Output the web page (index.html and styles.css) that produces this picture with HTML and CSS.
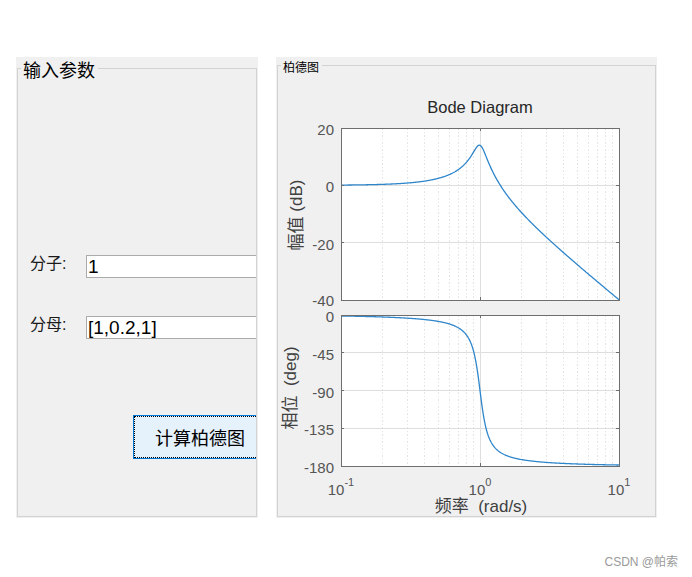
FILE: index.html
```html
<!DOCTYPE html>
<html lang="zh">
<head>
<meta charset="utf-8">
<title>柏德图</title>
<link rel="stylesheet" href="styles.css">
</head>
<body>
<div class="page">
  <div class="panels">
    <section class="panel panel-input">
      <div class="frame">
        <span class="legend legend-lg">输入参数</span>
        <div class="form">
          <div class="row"><label class="lbl">分子:</label><input class="field" value="1"></div>
          <div class="row"><label class="lbl">分母:</label><input class="field" value="[1,0.2,1]"></div>
          <button class="btn"><span class="btn-focus">计算柏德图</span></button>
        </div>
      </div>
    </section>
    <section class="panel panel-plot">
      <div class="frame">
        <span class="legend legend-sm">柏德图</span>
        <svg class="plot" width="377" height="450" viewBox="278 66 377 450" xmlns="http://www.w3.org/2000/svg">
          <text class="ptitle" x="480" y="113" text-anchor="middle">Bode Diagram</text>

          <rect class="axbg" x="341" y="128" width="278" height="172"/>
          <path class="minor" id="mag-minor"/>
          <path class="major" id="mag-major"/>
          <path class="curve" id="mag-curve"/>
          <rect class="axbox" x="341" y="128" width="278" height="172"/>
          <path class="ticks" id="mag-ticks"/>

          <rect class="axbg" x="341" y="315" width="278" height="151"/>
          <path class="minor" id="ph-minor"/>
          <path class="major" id="ph-major"/>
          <path class="curve" id="ph-curve"/>
          <rect class="axbox" x="341" y="315" width="278" height="151"/>
          <path class="ticks" id="ph-ticks"/>

          <g class="tick" text-anchor="end">
            <text x="334" y="135">20</text>
            <text x="334" y="192.3">0</text>
            <text x="334" y="249.7">-20</text>
            <text x="334" y="306">-40</text>
            <text x="334" y="322">0</text>
            <text x="334" y="359.8">-45</text>
            <text x="334" y="397.5">-90</text>
            <text x="334" y="435.3">-135</text>
            <text x="334" y="473">-180</text>
          </g>
          <g class="tick" text-anchor="middle">
            <text x="341" y="495">10<tspan class="sup" dy="-9">-1</tspan></text>
            <text x="480" y="495">10<tspan class="sup" dy="-9">0</tspan></text>
            <text x="619" y="495">10<tspan class="sup" dy="-9">1</tspan></text>
          </g>
          <text class="alabel" transform="translate(302 215) rotate(-90)" text-anchor="middle">幅值 (dB)</text>
          <text class="alabel" transform="translate(295.5 388) rotate(-90)" text-anchor="middle">相位  (deg)</text>
          <text class="alabel" x="481" y="512" text-anchor="middle">频率  (rad/s)</text>
        </svg>
      </div>
    </section>
  </div>
  <div class="watermark">CSDN @帕索</div>
</div>
<script src="script.js"></script>
</body>
</html>
```

FILE: styles.css
```css
* { box-sizing: border-box; }
html, body { margin: 0; background: #ffffff; }
body { font-family: "Liberation Sans", "Noto Sans CJK SC", sans-serif; color: #000; }

.page { width: 692px; height: 577px; padding: 57px 0 0 16px; overflow: hidden; }
.panels { display: flex; gap: 18px; }

.panel { background: #f0f0f0; height: 461px; }
.panel-input { width: 242px; padding: 11px 1px 1px 1px; }
.panel-plot { width: 381px; padding: 8px 1px 1px 1px; }

.frame { position: relative; height: 100%; border: 1px solid #d2d2d2; }

.legend {
  position: absolute;
  left: 3px;
  background: #f0f0f0;
  padding: 0 3px 0 2px;
  white-space: nowrap;
  font-family: "Noto Sans CJK SC", sans-serif;
  color: #000;
}
.legend-lg { top: -9px; font-size: 18px; line-height: 18px; }
.legend-sm { top: -5px; font-size: 12px; line-height: 12px; }

.form { height: 100%; overflow: hidden; padding: 186px 0 0 12px; }
.row { display: flex; align-items: flex-start; height: 23px; }
.row + .row { margin-top: 38px; }
.lbl {
  width: 56px;
  flex: none;
  font-size: 16px;
  line-height: 18px;
  font-family: "Liberation Sans", "Noto Sans CJK SC", sans-serif;
  color: #1a1a1a;
}
.field {
  flex: none;
  width: 220px;
  height: 23px;
  margin: 0;
  border: 1px solid #ababab;
  background: #fff;
  padding: 1px 1px 0 1px;
  font-family: "Liberation Sans", sans-serif;
  font-size: 19px;
  line-height: 21px;
  color: #000;
  outline: none;
}

.btn {
  display: block;
  margin: 76px 0 0 103px;
  width: 170px;
  height: 44px;
  padding: 0;
  border: 1px solid #0078d7;
  background: #e5f1fb;
  font-family: "Noto Sans CJK SC", sans-serif;
  font-size: 18px;
  color: #000;
}
.btn-focus {
  display: flex;
  align-items: center;
  height: 100%;
  padding-left: 20px;
  border: 1px dotted #000;
  white-space: nowrap;
}

.plot { display: block; }
.ptitle { font-family: "Liberation Sans", sans-serif; font-size: 16.5px; fill: #262626; }
.axbg { fill: #ffffff; }
.axbox { fill: none; stroke: #6e6e6e; stroke-width: 1; shape-rendering: crispEdges; }
.major { fill: none; stroke: #dedede; stroke-width: 1; shape-rendering: crispEdges; }
.minor { fill: none; stroke: #e4e4e4; stroke-width: 1; stroke-dasharray: 1.5 2; shape-rendering: crispEdges; }
.ticks { fill: none; stroke: #6e6e6e; stroke-width: 1; shape-rendering: crispEdges; }
.curve { fill: none; stroke: #2f86cb; stroke-width: 1.3; }
.tick { font-family: "Liberation Sans", sans-serif; font-size: 15px; fill: #555; }
.sup { font-size: 11px; }
.alabel {
  font-family: "Liberation Sans", "Noto Sans CJK SC", sans-serif;
  font-size: 17px;
  fill: #404040;
  white-space: pre;
}

.watermark {
  margin-top: 36px;
  padding-right: 14px;
  text-align: right;
  font-family: "Liberation Sans", "Noto Sans CJK SC", sans-serif;
  font-size: 12px;
  line-height: 16px;
  color: #9a9a9a;
}
```

FILE: script.js
```js
(function () {
  var X0 = 341, D = 139;
  function X(lw) { return X0 + (lw + 1) * D; }
  var A = {
    mag: { t: 128, b: 300, min: -40, max: 20, majors: [0, -20] },
    ph: { t: 315, b: 466, min: -180, max: 0, majors: [-45, -90, -135] }
  };
  function Y(a, v) { return a.t + (a.max - v) / (a.max - a.min) * (a.b - a.t); }
  var minorX = [];
  for (var d = -1; d < 1; d++) {
    for (var k = 2; k <= 9; k++) minorX.push(X(d + Math.log10(k)));
  }
  ['mag', 'ph'].forEach(function (id) {
    var a = A[id];
    var minor = '', major = '', ticks = '';
    minorX.forEach(function (x) { minor += 'M' + x.toFixed(2) + ' ' + a.t + 'V' + a.b; });
    major += 'M480 ' + a.t + 'V' + a.b;
    a.majors.forEach(function (v) {
      var y = Y(a, v).toFixed(2);
      major += 'M341 ' + y + 'H619';
      ticks += 'M341 ' + y + 'h3M619 ' + y + 'h-3';
    });
    ticks += 'M480 ' + a.t + 'v3M480 ' + a.b + 'v-3';
    document.getElementById(id + '-minor').setAttribute('d', minor);
    document.getElementById(id + '-major').setAttribute('d', major);
    document.getElementById(id + '-ticks').setAttribute('d', ticks);
    var pts = [];
    for (var i = 0; i <= 600; i++) {
      var lw = -1 + 2 * i / 600, w = Math.pow(10, lw);
      var re = 1 - w * w, im = 0.2 * w;
      var v = id === 'mag' ? -10 * Math.log10(re * re + im * im) : -Math.atan2(im, re) * 180 / Math.PI;
      pts.push((i ? 'L' : 'M') + X(lw).toFixed(2) + ' ' + Y(a, v).toFixed(2));
    }
    document.getElementById(id + '-curve').setAttribute('d', pts.join(''));
  });
})();
```
